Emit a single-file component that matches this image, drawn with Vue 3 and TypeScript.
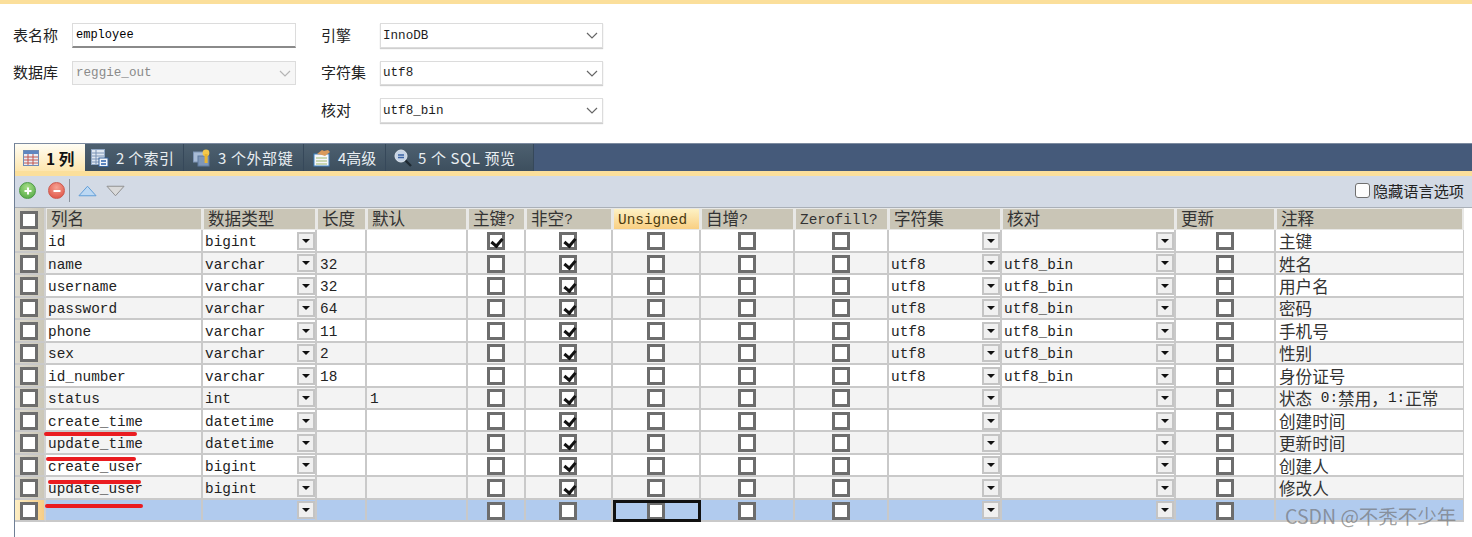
<script setup lang="ts">
interface Row {
  name: string
  type: string
  len: string
  def: string
  pk: boolean
  nn: boolean
  cs: string
  col: string
  note: string
}

const mk = (name: string, type: string, len: string, note: string, bin: boolean, def = '', pk = false): Row => ({
  name,
  type,
  len,
  def,
  pk,
  nn: true,
  cs: bin ? 'utf8' : '',
  col: bin ? 'utf8_bin' : '',
  note
})

const rows: Row[] = [
  mk('id', 'bigint', '', '主键', false, '', true),
  mk('name', 'varchar', '32', '姓名', true),
  mk('username', 'varchar', '32', '用户名', true),
  mk('password', 'varchar', '64', '密码', true),
  mk('phone', 'varchar', '11', '手机号', true),
  mk('sex', 'varchar', '2', '性别', true),
  mk('id_number', 'varchar', '18', '身份证号', true),
  mk('status', 'int', '', '状态 0:禁用，1:正常', false, '1'),
  mk('create_time', 'datetime', '', '创建时间', false),
  mk('update_time', 'datetime', '', '更新时间', false),
  mk('create_user', 'bigint', '', '创建人', false),
  mk('update_user', 'bigint', '', '修改人', false),
  { name: '', type: '', len: '', def: '', pk: false, nn: false, cs: '', col: '', note: '' }
]

const headers = ['列名', '数据类型', '长度', '默认', '主键?', '非空?', 'Unsigned', '自增?', 'Zerofill?', '字符集', '核对', '更新', '注释']

const marks = ['mark-a', 'mark-b', 'mark-c', 'mark-d']

function parts(text: string): { t: string; cjk: boolean }[] {
  const found = text.match(/[\u4e00-\u9fff\uff0c]+|[^\u4e00-\u9fff\uff0c]+/g) ?? []
  return found.map((t) => ({ t, cjk: /[\u4e00-\u9fff\uff0c]/.test(t) }))
}
</script>

<template>
  <div class="page">
    <div class="topbar"></div>
    <div class="form">
      <span class="lab">表名称</span>
      <div class="field text"><span>employee</span></div>
      <span class="lab second">引擎</span>
      <div class="field"><span>InnoDB</span><svg class="chev" viewBox="0 0 12 7"><path d="M1 1l5 5 5-5" /></svg></div>

      <span class="lab">数据库</span>
      <div class="field off"><span>reggie_out</span><svg class="chev" viewBox="0 0 12 7"><path d="M1 1l5 5 5-5" /></svg></div>
      <span class="lab second">字符集</span>
      <div class="field"><span>utf8</span><svg class="chev" viewBox="0 0 12 7"><path d="M1 1l5 5 5-5" /></svg></div>

      <span></span>
      <span></span>
      <span class="lab second">核对</span>
      <div class="field"><span>utf8_bin</span><svg class="chev" viewBox="0 0 12 7"><path d="M1 1l5 5 5-5" /></svg></div>
    </div>

    <section class="frame">
      <nav class="tabs">
        <div class="tab active">
          <svg class="ic" viewBox="0 0 16 16">
            <rect x="0.5" y="0.5" width="15" height="15" fill="#e8eef6" stroke="#6f8cb5" />
            <rect x="1" y="1" width="14" height="3" fill="#5f86c0" />
            <path d="M1 7h14M1 10h14M1 13h14M5 4v11M10 4v11" stroke="#c2564e" stroke-width="1" />
          </svg>
          <b><span class="num">1</span> 列</b>
        </div>
        <div class="tab t2">
          <svg class="ic" viewBox="0 0 18 18">
            <rect x="0.5" y="0.5" width="13" height="15" fill="#dfe7f1" stroke="#8fa6c4" />
            <path d="M1 4h12M1 7h12M1 10h12M1 13h12M5 1v14" stroke="#7b93b5" />
            <rect x="8" y="9" width="9" height="8.5" fill="#f3f6fa" stroke="#36639c" />
            <path d="M10 12h5M10 15h5" stroke="#2b62ad" stroke-width="1.5" />
          </svg>
          <span>2 个索引</span>
        </div>
        <div class="tab t3">
          <svg class="ic" viewBox="0 0 18 18">
            <rect x="0.5" y="3" width="11" height="10" fill="#a9bcd6" stroke="#7e95b6" />
            <rect x="5" y="7" width="11" height="10" fill="#7f97b8" stroke="#5f7a9f" />
            <circle cx="13" cy="4" r="3.4" fill="#f4c84a" />
            <rect x="11.6" y="5" width="3" height="9" fill="#e9b52f" />
          </svg>
          <span>3 个外部键</span>
        </div>
        <div class="tab t4">
          <svg class="ic" viewBox="0 0 18 18">
            <rect x="1" y="5" width="15" height="12" fill="#f5f7fa" stroke="#3f83c4" />
            <path d="M3 9h11M3 12h11M3 15h11" stroke="#9fb86f" />
            <path d="M4 5l5-4 2 1 4-1 2 2-5 4-3-1z" fill="#d99a5b" />
          </svg>
          <span>4高级</span>
        </div>
        <div class="tab t5">
          <svg class="ic" viewBox="0 0 18 18">
            <path d="M11 11l6 6" stroke="#1e2a33" stroke-width="2.4" />
            <circle cx="7" cy="7" r="6" fill="#c6d4e6" stroke="#dfe6ee" />
            <path d="M4 6h6M4 8.500h6" stroke="#3a62a3" stroke-width="1.400" />
          </svg>
          <span>5 个 SQL 预览</span>
        </div>
        <div class="rest"></div>
      </nav>
      <div class="strip"></div>

      <div class="toolbar">
        <span class="round add"><svg viewBox="0 0 10 10"><path d="M5 1.500v7M1.500 5h7" /></svg></span>
        <span class="round del"><svg viewBox="0 0 10 10"><path d="M1.500 5h7" /></svg></span>
        <span class="sep"></span>
        <svg class="tri" viewBox="0 0 20 12"><path d="M10 1L19 11H1z" fill="#bcd8f3" stroke="#5c9bd6" /></svg>
        <svg class="tri tri2" viewBox="0 0 20 12"><path d="M1 1H19L10 11z" fill="#dadada" stroke="#8d8d8d" /></svg>
        <label class="hide"><i></i><span>隐藏语言选项</span></label>
      </div>

      <div class="table">
        <div class="tr head">
          <div class="hcorner"><span class="box"></span></div>
          <div v-for="h in headers" :key="h" class="th" :class="{ hot: h === 'Unsigned' }">
            <span v-for="(p, i) in parts(h)" :key="i" :class="p.cjk ? 'cjk' : 'latin'">{{ p.t }}</span>
          </div>
        </div>

        <div v-for="(r, ri) in rows" :key="ri" class="tr" :class="{ alt: ri % 2 === 1, sel: ri === rows.length - 1 }">
          <div class="rh"><span class="box"></span></div>
          <div class="td">{{ r.name }}</div>
          <div class="td pick">{{ r.type }}<span class="btn"></span></div>
          <div class="td num3">{{ r.len }}</div>
          <div class="td num3">{{ r.def }}</div>
          <div class="td ck"><span class="box" :class="{ on: r.pk }"></span></div>
          <div class="td ck"><span class="box" :class="{ on: r.nn }"></span></div>
          <div class="td ck" :class="{ focus: ri === rows.length - 1 }"><span class="box"></span></div>
          <div class="td ck"><span class="box"></span></div>
          <div class="td ck"><span class="box"></span></div>
          <div class="td pick">{{ r.cs }}<span class="btn"></span></div>
          <div class="td pick">{{ r.col }}<span class="btn"></span></div>
          <div class="td ck"><span class="box"></span></div>
          <div class="td note">
            <span v-for="(p, i) in parts(r.note)" :key="i" :class="{ cjk: p.cjk }">{{ p.t }}</span>
          </div>
        </div>

        <span v-for="m in marks" :key="m" class="mark" :class="m"></span>
      </div>
    </section>

    <div class="wm">CSDN @不秃不少年</div>
  </div>
</template>

<style scoped>
.page {
  position: relative;
  width: 1472px;
  height: 537px;
  overflow: hidden;
  background: #fff;
  color: #222;
  font-family: "Liberation Mono", "Noto Sans CJK SC", monospace;
}
.topbar {
  height: 4px;
  background: #fbdf9b;
}
.form {
  display: grid;
  grid-template-columns: 59px 224px 84px 223px;
  grid-auto-rows: 24.5px;
  row-gap: 13px;
  padding: 19px 0 0 13px;
  height: 120px;
  box-sizing: border-box;
  align-items: center;
}
.lab {
  font-family: "Noto Sans CJK SC", sans-serif;
  font-size: 15px;
  line-height: 20px;
  padding-bottom: 1px;
  color: #222;
}
.second {
  padding-left: 25px;
}
.field {
  height: 24.5px;
  box-sizing: border-box;
  display: flex;
  align-items: center;
  justify-content: space-between;
  padding: 1px 4px 0 2px;
  background: #fff;
  border: 1px solid #dcdcdc;
  box-shadow: 0 1px 1px #cfcfcf;
  font-size: 12.6px;
  color: #1d1d1d;
}
.field.text {
  border-bottom: 2px solid #8a8a8a;
  box-shadow: none;
  padding-left: 3px;
  font-size: 12px;
  color: #000;
}
.field.off {
  background: #f6f6f6;
  box-shadow: none;
  padding-left: 3px;
  color: #8a8a8a;
}
.chev {
  width: 12px;
  height: 7px;
  fill: none;
  stroke: #666;
  stroke-width: 1.2;
}
.off .chev {
  stroke: #b5b5b5;
}
.frame {
  margin-left: 14px;
  margin-top: 19px;
  height: 394px;
  border-left: 1px solid #6f7f96;
  border-top: 1px solid #7d8ba0;
  box-sizing: border-box;
}
.tabs {
  display: flex;
  height: 27px;
  background: #455a7a;
  color: #e9eef2;
  font-family: "Noto Sans CJK SC", sans-serif;
  font-size: 15px;
}
.tab {
  display: flex;
  align-items: center;
  background: linear-gradient(#4d6070, #3d4f5e);
  border-right: 1px solid #36485a;
  box-sizing: border-box;
  white-space: nowrap;
  flex: none;
}
.tab span {
  letter-spacing: 0.3px;
}
.ic {
  flex: none;
  width: 18px;
  height: 18px;
}
.active {
  width: 70px;
  padding-left: 8px;
  gap: 7px;
  background: linear-gradient(#fffdf4, #fde6ae);
  color: #111;
  border-right: none;
}
.active .ic {
  width: 16px;
  height: 16px;
}
.active b {
  font-size: 15.5px;
}
.active .num {
  letter-spacing: 0;
}
.t2 {
  width: 99px;
  padding-left: 6px;
  gap: 7px;
}
.t3 {
  width: 120px;
  padding-left: 9px;
  gap: 7px;
}
.t3 span {
  letter-spacing: 0.6px;
}
.t4 {
  width: 82px;
  padding-left: 9px;
  gap: 7px;
}
.t5 {
  width: 148px;
  padding-left: 8px;
  gap: 6px;
}
.t4 span {
  letter-spacing: 0;
}
.t5 span {
  letter-spacing: 0.6px;
}
.rest {
  flex: 1;
}
.strip {
  height: 5px;
  background: #fbdf9b;
}
.toolbar {
  position: relative;
  display: flex;
  align-items: center;
  height: 32px;
  padding: 0 0 2px 4px;
  background: #d3dae5;
  border-bottom: 1px solid #aab0b8;
  box-sizing: border-box;
}
.round {
  width: 17px;
  height: 17px;
  border-radius: 50%;
  margin-right: 12px;
  display: flex;
  align-items: center;
  justify-content: center;
  flex: none;
}
.round svg {
  width: 10px;
  height: 10px;
  fill: none;
  stroke: #fff;
  stroke-width: 2;
}
.add {
  background: radial-gradient(circle at 50% 30%, #a8e08a, #4ba33f);
  border: 1px solid #4c9a45;
  box-sizing: border-box;
}
.del {
  background: radial-gradient(circle at 50% 30%, #f7a394, #dc4a3c);
  border: 1px solid #cc5a50;
  box-sizing: border-box;
}
.sep {
  width: 1px;
  height: 23px;
  background: #8c949e;
  margin: 0 8px 0 -8px;
}
.tri {
  width: 19px;
  height: 12px;
  flex: none;
}
.tri2 {
  margin-left: 9px;
}
.hide {
  margin-left: auto;
  margin-right: 8px;
  display: flex;
  align-items: center;
  gap: 3px;
  font-family: "Noto Sans CJK SC", sans-serif;
  font-size: 15.2px;
  line-height: 20px;
  color: #222;
}
.hide span {
  margin-top: -1px;
}
.hide i {
  width: 15px;
  height: 15px;
  box-sizing: border-box;
  border: 1px solid #6f6f6f;
  border-radius: 3px;
  background: #fdfdfd;
}
.table {
  position: relative;
  width: 1449px;
  font-size: 14.4px;
}
.tr {
  display: grid;
  grid-template-columns: 31px 157px 114px 50px 101px 58px 87px 88px 94px 94px 113px 174px 100px 188px;
  height: 22.46px;
  background: #fff;
}
.tr.head {
  height: 22.4px;
  background: #e8e8e6;
}
.tr.alt {
  background: #f3f3f3;
}
.tr.sel {
  background: #b1cbee;
}
.cjk {
  font-family: "Noto Sans CJK SC", sans-serif;
  font-size: 16.6px;
  line-height: 18px;
  color: #333;
}
.th .cjk {
  padding-bottom: 2px;
}
.latin {
  line-height: 16px;
  padding-top: 2px;
}
.hcorner,
.rh {
  display: flex;
  align-items: center;
  justify-content: center;
  background: linear-gradient(90deg, #dedbd0, #cbc7b8);
  border-right: 2px solid #d0d0d0;
  border-bottom: 2px solid #c9c9c9;
  box-sizing: border-box;
  padding: 1px 1px 0 0;
}
.sel .rh {
  background: linear-gradient(90deg, #fdeec4, #f6cd86);
}
.th {
  display: flex;
  align-items: center;
  margin: 1px 2px 3px 1px;
  padding-left: 4px;
  background: #c9c5b6;
  color: #333;
  white-space: pre;
  box-sizing: border-box;
  min-width: 0;
}
.th.hot {
  background: linear-gradient(#fdf1c4, #f9cf82);
  color: #4a3a10;
}
.td {
  position: relative;
  display: flex;
  align-items: center;
  padding: 3px 0 0 2px;
  border-right: 2px solid #c9c9c9;
  border-bottom: 2px solid #c9c9c9;
  box-sizing: border-box;
  white-space: pre;
  min-width: 0;
  color: #222;
}
.num3 {
  padding-left: 3px;
}
.ck {
  justify-content: center;
  padding: 1px 1px 0 0;
}
.box {
  position: relative;
  display: block;
  flex: none;
  width: 18px;
  height: 18px;
  box-sizing: border-box;
  background: #fff;
  border: 3px solid #6d6d6d;
}
.box.on::after {
  content: "";
  position: absolute;
  left: 3.5px;
  top: 0.5px;
  width: 5px;
  height: 8px;
  border-right: 3px solid #111;
  border-bottom: 3px solid #111;
  transform: rotate(40deg);
}
.focus::after {
  content: "";
  position: absolute;
  inset: 0 -2px -2px 0;
  border: 3px solid #111;
}
.btn {
  position: absolute;
  right: 0;
  top: 1.5px;
  width: 18px;
  height: 18px;
  box-sizing: border-box;
  border: 2px solid #c4c4c4;
  background: #f0f0f0;
}
.btn::after {
  content: "";
  position: absolute;
  left: 3px;
  top: 5px;
  border-left: 4px solid transparent;
  border-right: 4px solid transparent;
  border-top: 4px solid #111;
}
.note {
  padding: 1px 0 0 3px;
  border-right: 1px solid #c9c9c9;
}
.mark {
  position: absolute;
  height: 4px;
  border-radius: 2px;
  background: #ea1c20;
}
.mark-a {
  left: 29px;
  width: 93px;
  top: 224px;
}
.mark-b {
  left: 31px;
  width: 90px;
  top: 249px;
}
.mark-c {
  left: 33px;
  width: 93px;
  top: 272px;
}
.mark-d {
  left: 30px;
  width: 98px;
  top: 296px;
}
.wm {
  position: absolute;
  left: 1285px;
  top: 504px;
  font-family: "Noto Sans CJK SC", sans-serif;
  font-size: 19.5px;
  line-height: 24px;
  color: rgba(110, 110, 110, 0.65);
  white-space: nowrap;
}
</style>

<style>
html,
body {
  margin: 0;
  overflow: hidden;
  background: #fff;
}
</style>
